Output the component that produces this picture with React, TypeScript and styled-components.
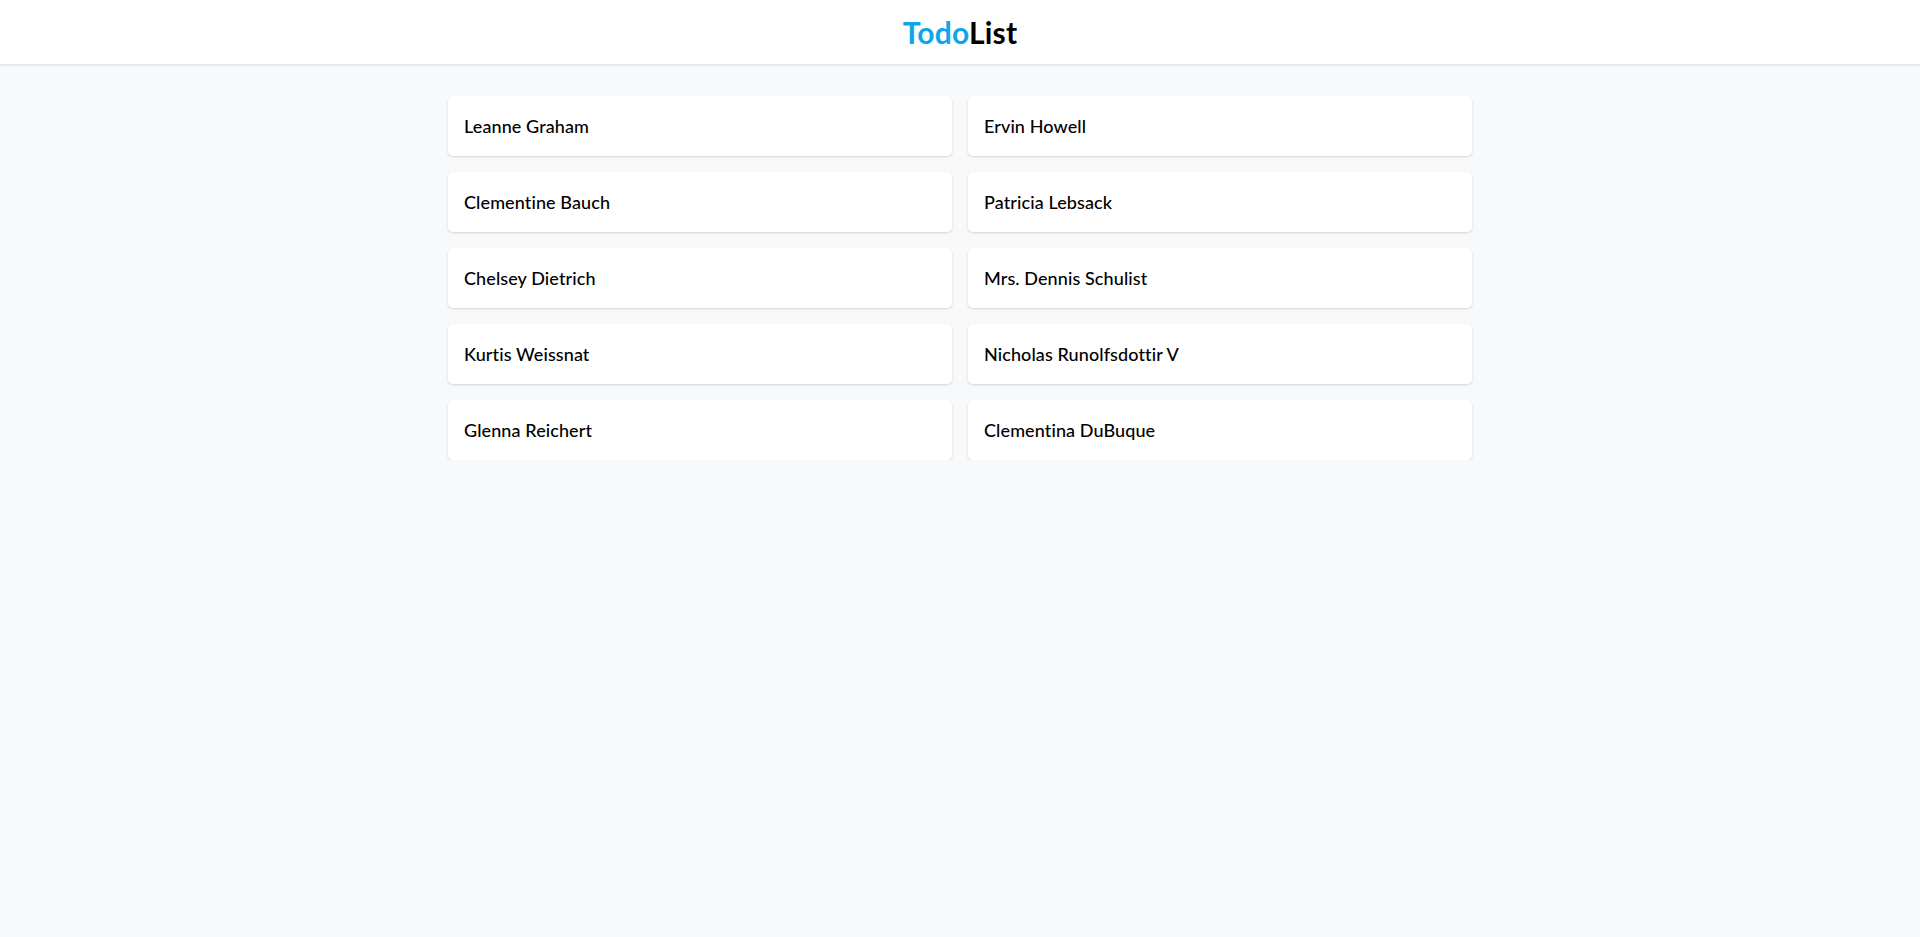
import React from "react";
import styled, { createGlobalStyle } from "styled-components";

const GlobalStyle = createGlobalStyle`
  html, body { margin: 0; padding: 0; }
  body {
    background: #f8f9fa;
    font-family: Lato, "Open Sans", "Liberation Sans", sans-serif;
    color: #111;
  }
  * { box-sizing: border-box; }
`;

const Header = styled.header`
  height: 64px;
  background: #fff;
  display: flex;
  align-items: center;
  justify-content: center;
  box-shadow: 0 1px 3px rgba(0, 0, 0, 0.12);
`;

const Title = styled.h1`
  margin: 0;
  font-size: 30px;
  font-weight: 700;
  color: #000;
  letter-spacing: 0.2px;
`;

const Accent = styled.span`
  color: #0ea5e9;
`;

const Main = styled.main`
  max-width: 1024px;
  margin: 0 auto;
  padding-top: 32px;
  display: grid;
  grid-template-columns: 1fr 1fr;
  gap: 16px;
`;

const Card = styled.div`
  height: 60px;
  background: #fff;
  border-radius: 5px;
  box-shadow: 0 1px 3px rgba(0, 0, 0, 0.1), 0 1px 2px rgba(0, 0, 0, 0.06);
  display: flex;
  align-items: center;
  padding: 0 16px;
  font-size: 18px;
  font-weight: 500;
  letter-spacing: 0.1px;
  color: #000;
`;

const users = [
  "Leanne Graham",
  "Ervin Howell",
  "Clementine Bauch",
  "Patricia Lebsack",
  "Chelsey Dietrich",
  "Mrs. Dennis Schulist",
  "Kurtis Weissnat",
  "Nicholas Runolfsdottir V",
  "Glenna Reichert",
  "Clementina DuBuque",
];

export default function App() {
  return (
    <>
      <GlobalStyle />
      <Header>
        <Title>
          <Accent>Todo</Accent>List
        </Title>
      </Header>
      <Main>
        {users.map((u) => (
          <Card key={u}>{u}</Card>
        ))}
      </Main>
    </>
  );
}
